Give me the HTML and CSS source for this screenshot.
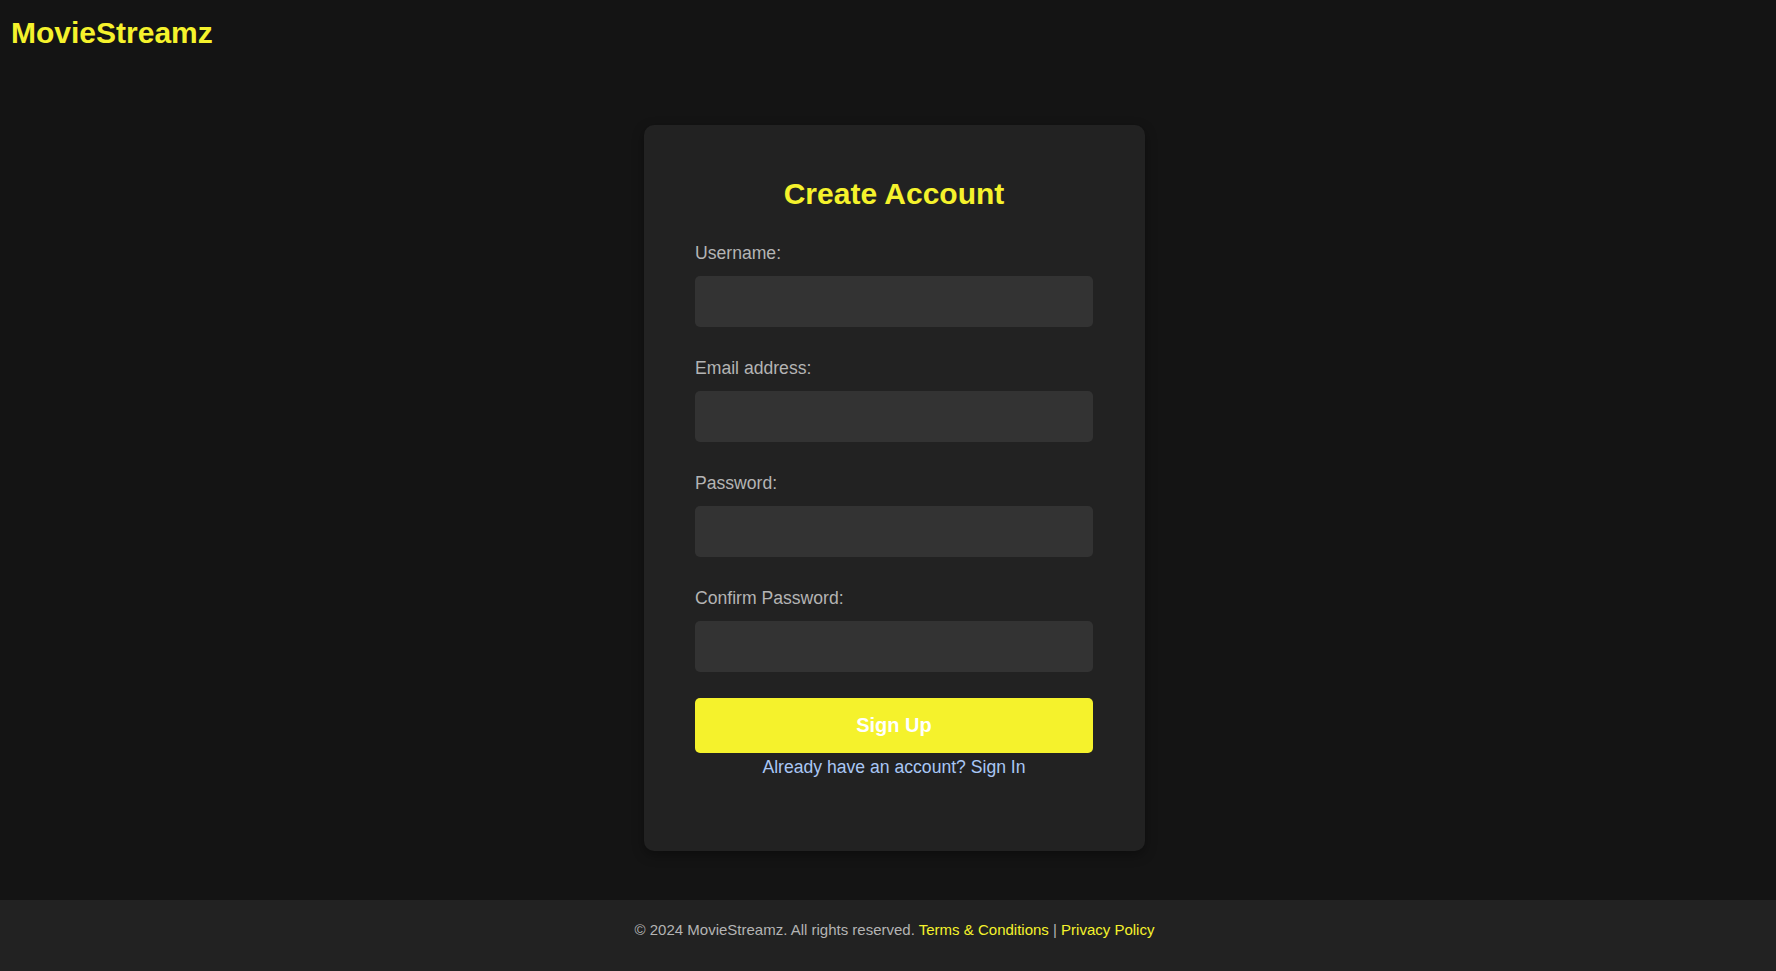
FILE: index.html
```html
<!DOCTYPE html>
<html lang="en">
<head>
<meta charset="utf-8">
<title>MovieStreamz - Create Account</title>
<link rel="stylesheet" href="styles.css">
</head>
<body>
<header class="site-header">
  <h1 class="logo">MovieStreamz</h1>
</header>
<main class="main">
  <div class="card">
    <h2 class="card-title">Create Account</h2>
    <form class="form">
      <label class="field-label" for="username">Username:</label>
      <input class="field-input" id="username" type="text">
      <label class="field-label" for="email">Email address:</label>
      <input class="field-input" id="email" type="email">
      <label class="field-label" for="password">Password:</label>
      <input class="field-input" id="password" type="password">
      <label class="field-label" for="confirm">Confirm Password:</label>
      <input class="field-input field-input-last" id="confirm" type="password">
      <button class="submit" type="button">Sign Up</button>
      <a class="signin-link" href="#">Already have an account? Sign In</a>
    </form>
  </div>
</main>
<footer class="site-footer">
  <p class="footer-text">© 2024 MovieStreamz. All rights reserved. <a class="footer-link" href="#">Terms &amp; Conditions</a> | <a class="footer-link" href="#">Privacy Policy</a></p>
</footer>
</body>
</html>
```
FILE: styles.css
```css
* {
  box-sizing: border-box;
}

html, body {
  margin: 0;
  padding: 0;
}

body {
  background: #141414;
  font-family: "Liberation Sans", Arial, sans-serif;
  color: #b4b4b4;
  height: 971px;
  overflow: hidden;
}

.site-header {
  height: 51px;
  padding: 16px 11px 0;
}

.logo {
  margin: 0;
  font-size: 30px;
  font-weight: bold;
  line-height: normal;
  color: #f5f22c;
}

.main {
  display: flex;
  justify-content: center;
  padding: 74px 0 49px 13px;
}

.card {
  width: 501px;
  height: 726px;
  background: #222222;
  border-radius: 10px;
  padding: 52px 52px 0 51px;
  box-shadow: 0 4px 12px rgba(0, 0, 0, 0.35);
}

.card-title {
  margin: 0 0 32px;
  font-size: 30px;
  font-weight: bold;
  line-height: normal;
  text-align: center;
  color: #f5f22c;
}

.form {
  display: flex;
  flex-direction: column;
}

.field-label {
  display: block;
  font-size: 17.6px;
  line-height: normal;
  color: #b4b4b4;
  margin-bottom: 12px;
}

.field-input {
  display: block;
  width: 100%;
  height: 51px;
  margin: 0 0 31px;
  border: none;
  border-radius: 5px;
  background: #333333;
  color: #eeeeee;
  font-size: 16px;
  padding: 0 12px;
  outline: none;
}

.field-input-last {
  margin-bottom: 26px;
}

.submit {
  display: block;
  width: 100%;
  height: 54.5px;
  border: none;
  border-radius: 5px;
  background: #f5f22c;
  color: #ffffff;
  font-family: "Liberation Sans", Arial, sans-serif;
  font-size: 20px;
  font-weight: bold;
  cursor: pointer;
}

.signin-link {
  display: block;
  margin-top: 4px;
  font-size: 17.6px;
  line-height: normal;
  text-align: center;
  color: #a9c7f5;
  text-decoration: none;
}

.site-footer {
  height: 71px;
  background: #222222;
  padding: 20.5px 0 0 13px;
}

.footer-text {
  margin: 0;
  font-size: 15px;
  line-height: normal;
  text-align: center;
  color: #b4b4b4;
}

.footer-link {
  color: #f5f22c;
  text-decoration: none;
}
```
